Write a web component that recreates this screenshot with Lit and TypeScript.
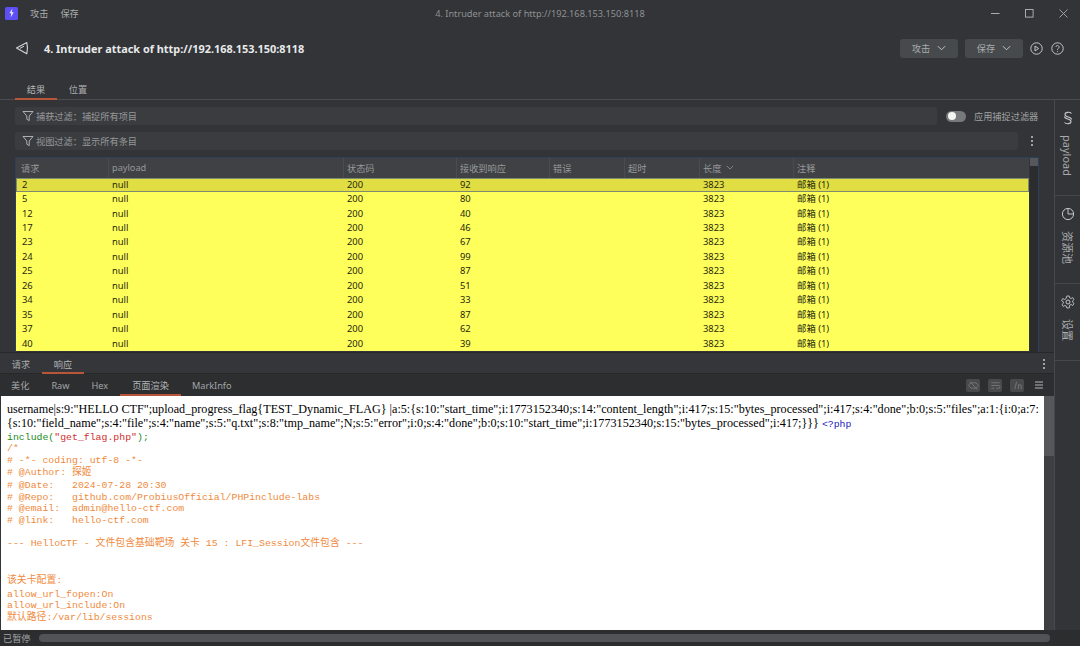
import { LitElement, html, css, svg } from "lit";
import { customElement } from "lit/decorators.js";

const rows: [string, string][] = [
  ["2", "92"], ["5", "80"], ["12", "40"], ["17", "46"], ["23", "67"], ["24", "99"],
  ["25", "87"], ["26", "51"], ["34", "33"], ["35", "87"], ["37", "62"], ["40", "39"],
];
const cols = ["请求", "payload", "状态码", "接收到响应", "错误", "超时", "长度", "注释"];
const codeLines = [
  "/*",
  "# -*- coding: utf-8 -*-",
  "# @Author: 探姬",
  "# @Date:   2024-07-28 20:30",
  "# @Repo:   github.com/ProbiusOfficial/PHPinclude-labs",
  "# @email:  admin@hello-ctf.com",
  "# @link:   hello-ctf.com",
  "",
  "--- HelloCTF - 文件包含基础靶场 关卡 15 : LFI_Session文件包含 ---",
  "",
  "",
  "该关卡配置:",
  "allow_url_fopen:On",
  "allow_url_include:On",
  "默认路径:/var/lib/sessions",
];

const filterIcon = svg`<svg class="fi" viewBox="0 0 12 12" width="12" height="12"><path d="M1 1.5h10L7.2 6v4.6L4.8 9.2V6z" fill="none" stroke="#b9bbbd" stroke-width=".9" stroke-linejoin="round"/></svg>`;
const chevron = svg`<svg viewBox="0 0 10 6" width="9" height="6"><path d="M1 1l4 4 4-4" fill="none" stroke="#c4c6c8" stroke-width="1.1"/></svg>`;

@customElement("app-root")
export class AppRoot extends LitElement {
  static styles = css`
    :host { display: block; width: 1080px; height: 646px; overflow: hidden; background: #323437; color: #a9abad;
      font: 9.5px "Noto Sans", "Noto Sans CJK SC", sans-serif; }
    * { box-sizing: border-box; }
    .app { display: flex; flex-direction: column; height: 646px; }

    .titlebar { height: 26px; display: flex; align-items: center; padding-left: 5px; position: relative; flex: none; }
    .logo { width: 13px; height: 13px; background: #5b4ff5; border-radius: 1.5px; display: flex; align-items: center; justify-content: center; margin-right: 12px; }
    .menu { margin-right: 12px; font-size: 9.2px; }
    .wintitle { position: absolute; left: 0; right: 0; text-align: center; font-size: 9.2px; color: #8f9193; pointer-events: none; }
    .winbtns { margin-left: auto; display: flex; align-items: center; gap: 25px; padding-right: 12px; }

    .header { height: 44px; flex: none; display: flex; align-items: center; padding-left: 15px; }
    .header h1 { margin: 0 0 0 15px; font-size: 10.9px; font-weight: 700; color: #e8e9ea; }
    .actions { margin-left: auto; display: flex; align-items: center; padding-right: 16px; }
    .btn { width: 58px; height: 19px; background: #474a4c; border-radius: 3px; display: flex; align-items: center; justify-content: center; gap: 7px; margin-right: 7px; font-size: 9.2px; color: #a9abad; }
    .round { margin-right: 8px; display: block; }
    .round:last-child { margin-right: 0; }

    .tabs { height: 30px; flex: none; display: flex; align-items: flex-end; padding-left: 15px; border-bottom: 1px solid #4a4c4f; }
    .tab { width: 42px; height: 22px; text-align: center; line-height: 24px; font-size: 9.2px; margin-bottom: -1px; border-bottom: 2px solid transparent; }
    .tab.on { border-bottom-color: #b9563a; color: #b4b6b8; }

    .body { flex: none; height: 530px; display: flex; }
    .main { width: 1054px; flex: none; display: flex; flex-direction: column; }
    .side { flex: 1; border-left: 1px solid #46484b; display: flex; flex-direction: column; }
    .side-item { border-bottom: 1px solid #46484b; display: flex; flex-direction: column; align-items: center; padding-top: 11px; gap: 10px; }
    .s1 { height: 96px; }
    .s2 { height: 88px; }
    .s3 { height: 77px; }
    .vert { writing-mode: vertical-rl; text-orientation: sideways; font-size: 11px; line-height: 13px; color: #a9abad; }

    .filters { padding: 7px 0 0 15px; display: flex; flex-direction: column; gap: 7px; flex: none; }
    .fr { display: flex; align-items: center; height: 18px; }
    .fbox { background: #3a3c3f; border-radius: 3px; height: 18px; display: flex; align-items: center; padding-left: 7px; gap: 2px; font-size: 9.2px; color: #97999b; }
    .f1 { width: 922px; }
    .f2 { width: 1003px; }
    .toggle { width: 20px; height: 11px; background: #77797b; border-radius: 6px; margin-left: 9px; padding: 1.5px; }
    .toggle i { display: block; width: 8px; height: 8px; border-radius: 50%; background: #f4f4f4; }
    .tlabel { margin-left: 8px; font-size: 9.2px; color: #a0a2a4; }
    .kebab { display: flex; flex-direction: column; gap: 2px; margin-left: 13px; }
    .kebab i { width: 2px; height: 2px; background: #c4c6c8; display: block; border-radius: 50%; }

    .tablewrap { margin: 7px 15px 0 15px; height: 195px; flex: none; border: 1px solid #2c4057; border-bottom: none; display: flex; overflow: hidden; }
    .tablebody { flex: 1; min-width: 0; }
    .sb { width: 8px; background: #2a2c2e; flex: none; margin-left: 1px; }
    .sb i { display: block; height: 8px; background: #55575a; }
    .sb b { display: block; height: 12px; }
    .thead, .row { display: grid; grid-template-columns: 92px 235px 113px 93px 75px 75px 94px 1fr; }
    .thead { height: 19.7px; background: #3f4144; }
    .th { display: flex; align-items: center; gap: 5px; padding-left: 3px; font-size: 9.2px; color: #96989a; border-left: 1px solid #4a4c4f; }
    .th:first-child { border-left: none; padding-left: 5px; }
    .row { height: 14.45px; background: #ffff5c; color: #27280f; font-size: 9.4px; line-height: 14.45px; }
    .row.sel { background: #e0de42; box-shadow: inset 0 0 0 1px #7d8a70; }
    .td { padding-left: 4px; white-space: nowrap; }
    .td:first-child { padding-left: 6px; }

    .reqtabs { height: 22px; flex: none; display: flex; align-items: flex-end; padding-left: 0; border-top: 1px solid #26282a; border-bottom: 1px solid #26282a; position: relative; background: #343639; }
    .reqtabs .tab { height: 21px; line-height: 23px; }
    .reqtabs .kebab { position: absolute; right: 9px; top: 6px; }
    .subtabs { height: 22px; flex: none; display: flex; align-items: stretch; background: #2c2e30; padding-right: 10px; }
    .st { padding: 0 11px; line-height: 24px; font-size: 9.2px; color: #a3a5a7; border-bottom: 2px solid transparent; }
    .st.on { border-bottom-color: #b9563a; color: #b4b6b8; padding: 0 12px; margin-left: 1px; }
    .st-icons { margin-left: auto; display: flex; align-items: center; gap: 8px; }
    .sq { width: 14px; height: 13px; background: #484a4c; border-radius: 2px; display: flex; align-items: center; justify-content: center; }

    .viewer { flex: 1; min-height: 0; display: flex; }
    .page { flex: 1; background: #fff; margin-left: 1px; padding: 6px 0 0 6px; overflow: hidden; color: #000; }
    .ser { font: 12.16px/14px "Liberation Serif", "Noto Sans CJK SC", serif; width: 1034px; }
    .php { color: #2222bb; font: 9.8px/14px "Liberation Mono", monospace; }
    .code { font: 9.85px/11.4px "Liberation Mono", "Noto Sans CJK SC", monospace; color: #f08a3c; }
    .ln { min-height: 11.4px; white-space: pre; }
    .ln.cjk { line-height: 14.2px; }
    .green { color: #228b22; }
    .red { color: #d03030; }
    .vsb { width: 10px; background: #3d3f42; flex: none; }
    .vsb i { display: block; height: 60px; background: #55575a; }

    .status { flex: 1; display: flex; align-items: center; padding: 0 30px 0 3px; gap: 8px; font-size: 9.2px; color: #a3a5a7; background: #2b2d2f; overflow: hidden; }
    .bar { flex: 1; height: 8px; background: #515356; border-radius: 4px; }
  `;

  render() {
    return html`<div class="app">
      <div class="titlebar">
        <div class="logo"><svg viewBox="0 0 8 12" width="7" height="10"><path d="M5 .5L1.5 6.2h2.2L3 11.5 6.8 5H4.4z" fill="#e8e6ff"/></svg></div>
        <span class="menu">攻击</span><span class="menu">保存</span>
        <span class="wintitle">4. Intruder attack of http://192.168.153.150:8118</span>
        <div class="winbtns">
          <svg viewBox="0 0 9 9" width="9" height="9"><path d="M0 4.5h8.5" stroke="#a9abad" stroke-width="1"/></svg>
          <svg viewBox="0 0 9 9" width="9" height="9"><rect x=".5" y=".5" width="7.6" height="7.6" fill="none" stroke="#a9abad"/></svg>
          <svg viewBox="0 0 9 9" width="9" height="9"><path d="M.5.5l8 8M8.5.5l-8 8" stroke="#a9abad" stroke-width=".9"/></svg>
        </div>
      </div>
      <div class="header">
        <svg viewBox="0 0 14 14" width="14" height="14"><path d="M11.800 1.500L1.500 7l10.300 5.800c.9-3.800.9-7.500 0-11.300z" fill="none" stroke="#d5d6d7" stroke-width="1.100" stroke-linejoin="round"/><path d="M5 7.400l4-2.200" stroke="#d5d6d7"/></svg>
        <h1>4. Intruder attack of http://192.168.153.150:8118</h1>
        <div class="actions">
          <div class="btn">攻击 ${chevron}</div>
          <div class="btn">保存 ${chevron}</div>
          <svg class="round" viewBox="0 0 13 13" width="13" height="13"><circle cx="6.5" cy="6.5" r="5.7" fill="none" stroke="#c4c6c8" stroke-width="1"/><path d="M5 4l3.6 2.5L5 9z" fill="none" stroke="#c4c6c8"/></svg>
          <svg class="round" viewBox="0 0 13 13" width="13" height="13"><circle cx="6.5" cy="6.5" r="5.7" fill="none" stroke="#c4c6c8" stroke-width="1"/><path d="M4.9 5a1.6 1.6 0 1 1 2.4 1.5c-.6.4-.8.7-.8 1.3" fill="none" stroke="#c4c6c8"/><circle cx="6.5" cy="9.5" r=".6" fill="#c4c6c8"/></svg>
        </div>
      </div>
      <div class="tabs"><div class="tab on">结果</div><div class="tab">位置</div></div>
      <div class="body">
        <div class="main">
          <div class="filters">
            <div class="fr">
              <div class="fbox f1">${filterIcon}捕获过滤：捕捉所有项目</div>
              <div class="toggle"><i></i></div><span class="tlabel">应用捕捉过滤器</span>
            </div>
            <div class="fr">
              <div class="fbox f2">${filterIcon}视图过滤：显示所有条目</div>
              <div class="kebab"><i></i><i></i><i></i></div>
            </div>
          </div>
          <div class="tablewrap">
            <div class="tablebody">
              <div class="thead">
                ${cols.map((c) => html`<div class="th">${c}${c === "长度" ? html`<svg viewBox="0 0 10 6" width="8" height="5"><path d="M1 1l4 4 4-4" fill="none" stroke="#96989a"/></svg>` : ""}</div>`)}
              </div>
              ${rows.map((r, i) => html`<div class="row ${i === 0 ? "sel" : ""}">
                <div class="td">${r[0]}</div><div class="td">null</div><div class="td">200</div><div class="td">${r[1]}</div>
                <div class="td"></div><div class="td"></div><div class="td">3823</div><div class="td">邮箱 (1)</div>
              </div>`)}
            </div>
            <div class="sb"><i></i><b></b></div>
          </div>
          <div class="reqtabs"><div class="tab">请求</div><div class="tab on">响应</div><div class="kebab"><i></i><i></i><i></i></div></div>
          <div class="subtabs">
            <div class="st">美化</div><div class="st">Raw</div><div class="st">Hex</div><div class="st on">页面渲染</div><div class="st">MarkInfo</div>
            <div class="st-icons">
              <div class="sq"><svg viewBox="0 0 12 12" width="11" height="11"><ellipse cx="6" cy="6" rx="5" ry="3" fill="none" stroke="#76787a"/><path d="M2 1.5l8 9" stroke="#76787a"/></svg></div>
              <div class="sq"><svg viewBox="0 0 12 12" width="11" height="11"><path d="M1.500 3h9M1.500 6h8a1.500 1.500 0 0 1 0 3H7M1.500 9h3" fill="none" stroke="#76787a"/></svg></div>
              <div class="sq"><svg viewBox="0 0 12 12" width="11" height="11"><path d="M5 2L3 10M7 5v5M7 6c.5-1 3-1.500 3 .5V10" fill="none" stroke="#76787a"/></svg></div>
              <svg viewBox="0 0 10 10" width="10" height="10" style="margin-left:2px"><path d="M1 2h8M1 5h8M1 8h8" stroke="#b4b6b8"/></svg>
            </div>
          </div>
          <div class="viewer">
            <div class="page">
              <div class="ser">username|s:9:"HELLO CTF";upload_progress_flag{TEST_Dynamic_FLAG} |a:5:{s:10:"start_time";i:1773152340;s:14:"content_length";i:417;s:15:"bytes_processed";i:417;s:4:"done";b:0;s:5:"files";a:1:{i:0;a:7:{s:10:"field_name";s:4:"file";s:4:"name";s:5:"q.txt";s:8:"tmp_name";N;s:5:"error";i:0;s:4:"done";b:0;s:10:"start_time";i:1773152340;s:15:"bytes_processed";i:417;}}} <span class="php">&lt;?php</span></div>
              <div class="code">
                <div class="ln green">include(<span class="red">"get_flag.php"</span>);</div>
                ${codeLines.map((l) => html`<div class="ln ${/[^\x00-\x7f]/.test(l) ? "cjk" : ""}">${l}</div>`)}
              </div>
            </div>
            <div class="vsb"><i></i></div>
          </div>
        </div>
        <div class="side">
          <div class="side-item s1">
            <svg viewBox="0 0 12 14" width="12" height="14"><path d="M9.500 2.500C8 .8 3 .8 3 3.500c0 3 6.500 2 6.500 5M2.500 11.500c1.500 1.700 6.500 1.700 6.500-1 0-3-6.500-2-6.500-5" fill="none" stroke="#c4c6c8" stroke-width="1.100"/></svg>
            <span class="vert">payload</span>
          </div>
          <div class="side-item s2">
            <svg viewBox="0 0 14 14" width="14" height="14"><circle cx="7" cy="7" r="5.600" fill="none" stroke="#c4c6c8" stroke-width="1"/><path d="M7 1.400V7h5.600" fill="none" stroke="#c4c6c8" stroke-width="1"/></svg>
            <span class="vert">资源池</span>
          </div>
          <div class="side-item s3">
            <svg viewBox="0 0 14 14" width="14" height="14"><circle cx="7" cy="7" r="2" fill="none" stroke="#c4c6c8"/><path d="M5.800 1h2.400l.4 1.800 1.500.7 1.600-1 1.300 2-1.300 1.200v1.600l1.300 1.200-1.300 2-1.600-1-1.500.7L8.200 13H5.800l-.4-1.800-1.500-.7-1.600 1-1.300-2 1.300-1.200V6.700L.5 5.500l1.300-2 1.600 1 1.500-.7z" fill="none" stroke="#c4c6c8" stroke-width=".9"/></svg>
            <span class="vert">设置</span>
          </div>
        </div>
      </div>
      <div class="status">已暂停<div class="bar"></div></div>
    </div>`;
  }
}
